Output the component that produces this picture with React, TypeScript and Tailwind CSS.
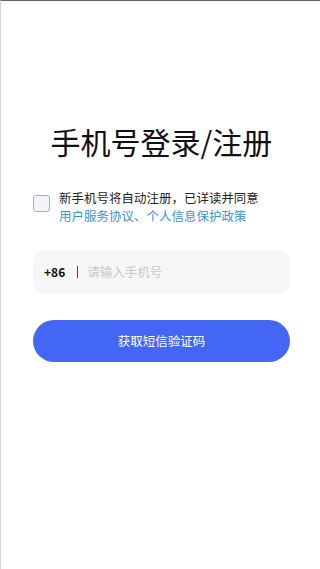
import { useState } from 'react';

export default function App() {
  const [checked, setChecked] = useState(false);
  const [phone, setPhone] = useState('');

  return (
    <div
      className="min-h-[569px] w-full bg-white border-t border-t-[#5f6368] border-l border-l-[#d4d4d8] text-[#111]"
      style={{ fontFamily: '"Noto Sans CJK SC", "Noto Sans", sans-serif' }}
    >
      <div className="pl-[32px] pr-[30px] pt-[125px]">
        {/* Title */}
        <h1 className="text-center text-[30px] leading-[30px] font-normal text-[#111]">手机号登录/注册</h1>

        {/* Agreement */}
        <label className="mt-[33px] flex items-start gap-[9px] cursor-pointer">
          <button
            type="button"
            onClick={() => setChecked(!checked)}
            className={`mt-[6px] h-[17px] w-[17px] shrink-0 rounded-[3px] border ${
              checked ? 'bg-[#4466f5] border-[#4466f5]' : 'bg-[#f3f5f9] border-[#a3aec2]'
            }`}
          />
          <div className="text-[12.4px] leading-[18px] tracking-[0.1px]">
            <div className="text-[#222]">新手机号将自动注册，已详读并同意</div>
            <div className="text-[#3a93db]">用户服务协议、个人信息保护政策</div>
          </div>
        </label>

        {/* Phone input */}
        <div className="mt-[26px] flex h-[42px] items-center rounded-[10px] bg-[#f6f6f6] pl-[11px] pr-[12px]">
          <span className="text-[12px] font-bold text-[#111]">+86</span>
          <span className="ml-[12px] h-[12px] w-px bg-[#444]" />
          <input
            value={phone}
            onChange={(e) => setPhone(e.target.value)}
            placeholder="请输入手机号"
            className="ml-[9px] min-w-0 flex-1 bg-transparent text-[12.5px] outline-none placeholder:text-[#c9c9c9]"
          />
        </div>

        {/* Submit */}
        <button
          type="button"
          className="mt-[27px] flex h-[42px] w-full items-center justify-center rounded-full bg-[#4466f5] text-[12.5px] text-white"
        >
          获取短信验证码
        </button>
      </div>
    </div>
  );
}
